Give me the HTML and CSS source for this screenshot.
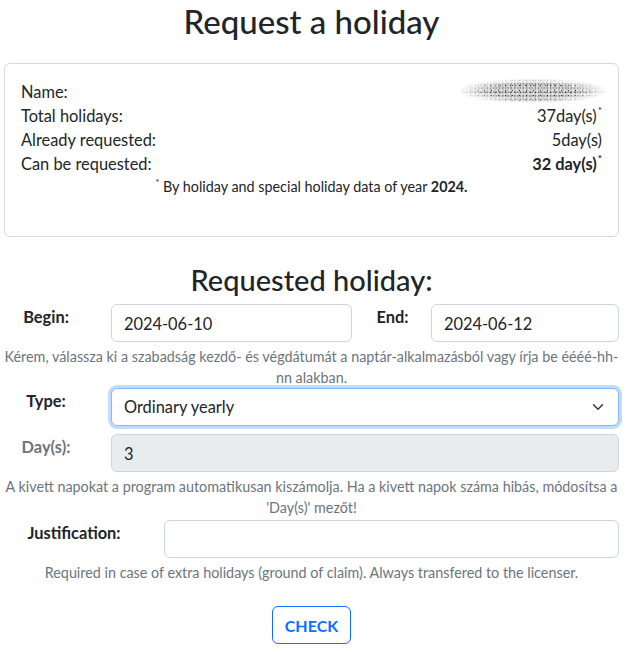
FILE: index.html
```html
<!DOCTYPE html>
<html lang="en">
<head>
<meta charset="utf-8">
<title>Request a holiday</title>
<link rel="stylesheet" href="styles.css">
</head>
<body>
<div class="container">
  <h1 class="title">Request a holiday</h1>

  <div class="card">
    <div class="info-row">
      <span>Name:</span>
      <span class="blurred" aria-label="hidden name"></span>
    </div>
    <div class="info-row">
      <span>Total holidays:</span>
      <span>37day(s)<sup>*</sup></span>
    </div>
    <div class="info-row">
      <span>Already requested:</span>
      <span>5day(s)</span>
    </div>
    <div class="info-row">
      <span>Can be requested:</span>
      <span class="strong">32 day(s)<sup>*</sup></span>
    </div>
    <p class="footnote"><sup>*</sup> By holiday and special holiday data of year <b>2024.</b></p>
  </div>

  <h2 class="subtitle">Requested holiday:</h2>

  <form class="form">
    <div class="row row-dates">
      <label class="lbl" for="begin">Begin:</label>
      <input class="ctl" id="begin" type="text" value="2024-06-10">
      <label class="lbl" for="end">End:</label>
      <input class="ctl" id="end" type="text" value="2024-06-12">
    </div>
    <p class="help">Kérem, válassza ki a szabadság kezdő- és végdátumát a naptár-alkalmazásból vagy írja be éééé-hh-nn alakban.</p>

    <div class="row row-main">
      <label class="lbl" for="type">Type:</label>
      <div class="select-wrap">
        <select class="ctl select" id="type">
          <option>Ordinary yearly</option>
        </select>
        <svg class="chev" width="16" height="12" viewBox="0 0 16 16"><path d="M2 5l6 6 6-6" fill="none" stroke="#343a40" stroke-width="2" stroke-linecap="round" stroke-linejoin="round"/></svg>
      </div>
    </div>

    <div class="row row-main row-gap">
      <label class="lbl lbl-muted" for="days">Day(s):</label>
      <input class="ctl ctl-disabled" id="days" type="text" value="3" disabled>
    </div>
    <p class="help">A kivett napokat a program automatikusan kiszámolja. Ha a kivett napok száma hibás, módosítsa a 'Day(s)' mezőt!</p>

    <div class="row row-just">
      <label class="lbl" for="just">Justification:</label>
      <input class="ctl" id="just" type="text" value="">
    </div>
    <p class="help help-last">Required in case of extra holidays (ground of claim). Always transfered to the licenser.</p>

    <div class="actions">
      <button type="button" class="btn">CHECK</button>
    </div>
  </form>
</div>
</body>
</html>
```
FILE: styles.css
```css
html, body {
  margin: 0;
  padding: 0;
  background: #fff;
}
body {
  font-family: Lato, "Liberation Sans", sans-serif;
  font-size: 16.4px;
  line-height: 24px;
  color: #212529;
}
.container {
  width: 615px;
  margin-left: 4px;
}
.title {
  margin: 2px 0 21px;
  font-size: 33px;
  font-weight: 500;
  line-height: 1.2;
  text-align: center;
}
.card {
  border: 1px solid #d6d9dc;
  border-radius: 6px;
  padding: 16px;
}
.info-row {
  display: flex;
  justify-content: space-between;
  height: 24px;
}
.info-row sup {
  font-size: 10px;
  line-height: 0;
  vertical-align: 8px;
  margin-left: 1px;
}
.strong {
  font-weight: 700;
}
.blurred {
  display: block;
  width: 146px;
  height: 30px;
  margin: -7px -4px 0 0;
  background:
    radial-gradient(circle, rgba(10,10,10,.75) 0.6px, transparent 1px) 0 0 / 7px 5px,
    radial-gradient(circle, rgba(30,30,30,.6) 0.7px, transparent 1.1px) 3px 2px / 5px 7px,
    radial-gradient(circle, rgba(70,70,70,.45) 0.8px, transparent 1.2px) 2px 1px / 3px 4px,
    radial-gradient(circle, rgba(120,120,120,.35) 0.9px, transparent 1.3px) 1px 3px / 4px 3px,
    radial-gradient(circle, rgba(170,170,170,.35) 1px, transparent 1.4px) 0 1px / 2px 2px;
  -webkit-mask: radial-gradient(ellipse 52% 42% at 50% 60%, #000 55%, rgba(0,0,0,.3) 85%, transparent 100%);
  mask: radial-gradient(ellipse 52% 42% at 50% 60%, #000 55%, rgba(0,0,0,.3) 85%, transparent 100%);
}
.footnote {
  margin: 0 0 23px;
  font-size: 14.35px;
  line-height: 21px;
  text-align: center;
}
.footnote sup {
  font-size: 9px;
  line-height: 0;
  vertical-align: 6px;
}
.subtitle {
  margin: 26px 0 7px;
  font-size: 29px;
  font-weight: 500;
  line-height: 1.2;
  text-align: center;
}
.form {
  margin: 0;
}
.row {
  display: grid;
  align-items: start;
}
.row-dates {
  grid-template-columns: 107px 241px 79px 188px;
}
.row-main {
  grid-template-columns: 107px 508px;
}
.row-gap {
  margin-top: 8px;
}
.row-just {
  grid-template-columns: 160px 455px;
}
.lbl {
  font-weight: 700;
  padding-top: 1px;
  text-align: center;
  padding-right: 23px;
}
.row-dates .lbl:nth-of-type(2) {
  padding-right: 0;
  padding-left: 2px;
}
.row-just .lbl {
  text-align: center;
  padding-left: 18px;
  padding-right: 38px;
}
.lbl-muted {
  color: #6c757d;
}
.ctl {
  box-sizing: border-box;
  width: 100%;
  height: 38px;
  margin: 0;
  padding: 6px 12px;
  font-family: inherit;
  font-size: 16.4px;
  line-height: 24px;
  color: #212529;
  background: #fff;
  border: 1px solid #ced4da;
  border-radius: 6px;
  outline: none;
}
.ctl-disabled {
  background: #e9ecef;
  color: #212529;
  opacity: 1;
  -webkit-text-fill-color: #212529;
}
.select-wrap {
  position: relative;
}
.select {
  -webkit-appearance: none;
  appearance: none;
  border-color: #86b7fe;
  box-shadow: 0 0 0 3px rgba(13, 110, 253, .25);
}
.chev {
  position: absolute;
  right: 13px;
  top: 13px;
  pointer-events: none;
}
.help {
  margin: 4px 0 0;
  font-size: 14.35px;
  line-height: 21px;
  color: #6c757d;
  text-align: center;
}
.help + .row-just {
  margin-top: 2px;
}
.help-last {
  margin-bottom: 23px;
}
.actions {
  display: flex;
  justify-content: center;
}
.btn {
  height: 38px;
  padding: 0 12px;
  font-family: inherit;
  font-size: 16px;
  font-weight: 700;
  color: #0d6efd;
  background: #fff;
  border: 1px solid #0d6efd;
  border-radius: 6px;
}
```
